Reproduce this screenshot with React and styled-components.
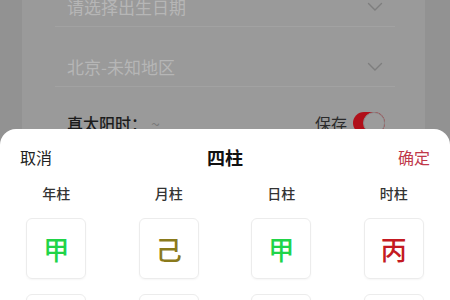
import React from 'react';
import styled, { createGlobalStyle } from 'styled-components';

const GlobalStyle = createGlobalStyle`
  html, body {
    margin: 0;
    padding: 0;
    width: 450px;
    height: 300px;
    overflow: hidden;
    background: #929292;
    font-family: "Noto Sans CJK SC", "Noto Sans", sans-serif;
  }
`;

const stems = [
  { label: '年柱', stem: '甲', branch: '子', color: '#20d448' },
  { label: '月柱', stem: '己', branch: '巳', color: '#8a7a1c' },
  { label: '日柱', stem: '甲', branch: '子', color: '#20d448' },
  { label: '时柱', stem: '丙', branch: '寅', color: '#c41a22' },
];

const Chevron = () => (
  <svg width='16' height='10' viewBox='0 0 16 10' fill='none'>
    <path d='M1.5 1.5 L8 8 L14.5 1.5' stroke='#7e7e7e' strokeWidth='1.4' strokeLinecap='round' />
  </svg>
);

const App = () => {
  return (
    <>
      <GlobalStyle />
      <Card>
        <FieldRow>
          <Placeholder>请选择出生日期</Placeholder>
          <Chevron />
        </FieldRow>
        <FieldRow>
          <Placeholder>北京-未知地区</Placeholder>
          <Chevron />
        </FieldRow>
        <SolarRow>
          <SolarLabel>
            真太阳时：<Tilde>~</Tilde>
          </SolarLabel>
          <SaveGroup>
            保存
            <Toggle>
              <Knob />
            </Toggle>
          </SaveGroup>
        </SolarRow>
      </Card>

      <Sheet>
        <SheetHeader>
          <HeaderAction>取消</HeaderAction>
          <SheetTitle>四柱</SheetTitle>
          <HeaderAction confirm>确定</HeaderAction>
        </SheetHeader>
        <PillarGrid>
          {stems.map((p, i) => (
            <ColumnLabel key={'l' + i}>{p.label}</ColumnLabel>
          ))}
          {stems.map((p, i) => (
            <Cell key={'s' + i}>
              <Glyph color={p.color}>{p.stem}</Glyph>
            </Cell>
          ))}
          {stems.map((p, i) => (
            <Cell key={'b' + i}>
              <Glyph color={p.color}>{p.branch}</Glyph>
            </Cell>
          ))}
        </PillarGrid>
      </Sheet>
    </>
  );
};

const Card = styled.div`
  margin: -33px 25px 0 22px;
  padding: 0 30px 0 33px;
  height: 340px;
  background: #9a9a9a;
`;

const FieldRow = styled.div`
  box-sizing: border-box;
  display: flex;
  align-items: center;
  justify-content: space-between;
  height: 60px;
  padding: 20px 12px 0;
  border-bottom: 1px solid #a2a2a2;
`;

const Placeholder = styled.span`
  font-size: 17px;
  color: #b6b6b6;
`;

const SolarRow = styled.div`
  display: flex;
  align-items: center;
  justify-content: space-between;
  padding: 24px 10px 0 12px;
`;

const SolarLabel = styled.span`
  font-size: 16px;
  font-weight: 500;
  color: #1c1c1c;
`;

const Tilde = styled.span`
  color: #7a7a7a;
  margin-left: 4px;
  font-weight: 400;
`;

const SaveGroup = styled.div`
  display: flex;
  align-items: center;
  gap: 6px;
  font-size: 16px;
  color: #2a2a2a;
`;

const Toggle = styled.div`
  position: relative;
  width: 32px;
  height: 22px;
  border-radius: 11px;
  background: #b0101a;
`;

const Knob = styled.div`
  position: absolute;
  right: 0;
  top: 0;
  width: 20px;
  height: 20px;
  border-radius: 50%;
  background: #9c9c9c;
  border: 1px solid #8a8a8a;
`;

const Sheet = styled.div`
  position: fixed;
  left: 0;
  right: 0;
  top: 129px;
  bottom: 0;
  background: #fff;
  border-radius: 16px 16px 0 0;
`;

const SheetHeader = styled.div`
  display: flex;
  align-items: center;
  justify-content: space-between;
  padding: 16px 20px 0;
  height: 24px;
`;

const HeaderAction = styled.span`
  font-size: 16px;
  color: ${({ confirm }) => (confirm ? '#c0394a' : '#222')};
`;

const SheetTitle = styled.span`
  font-size: 18px;
  font-weight: 700;
  color: #111;
`;

const PillarGrid = styled.div`
  display: grid;
  grid-template-columns: repeat(4, 1fr);
  justify-items: center;
  row-gap: 15px;
  margin-top: 14px;
`;

const ColumnLabel = styled.span`
  font-size: 14px;
  font-weight: 500;
  line-height: 20px;
  color: #333;
`;

const Cell = styled.div`
  display: flex;
  align-items: center;
  justify-content: center;
  width: 58px;
  height: 59px;
  border: 1px solid #ececec;
  border-radius: 6px;
  box-shadow: 0 1px 2px rgba(0, 0, 0, 0.04);
`;

const Glyph = styled.span`
  font-size: 26px;
  font-weight: 500;
  color: ${({ color }) => color};
`;

export default App;
